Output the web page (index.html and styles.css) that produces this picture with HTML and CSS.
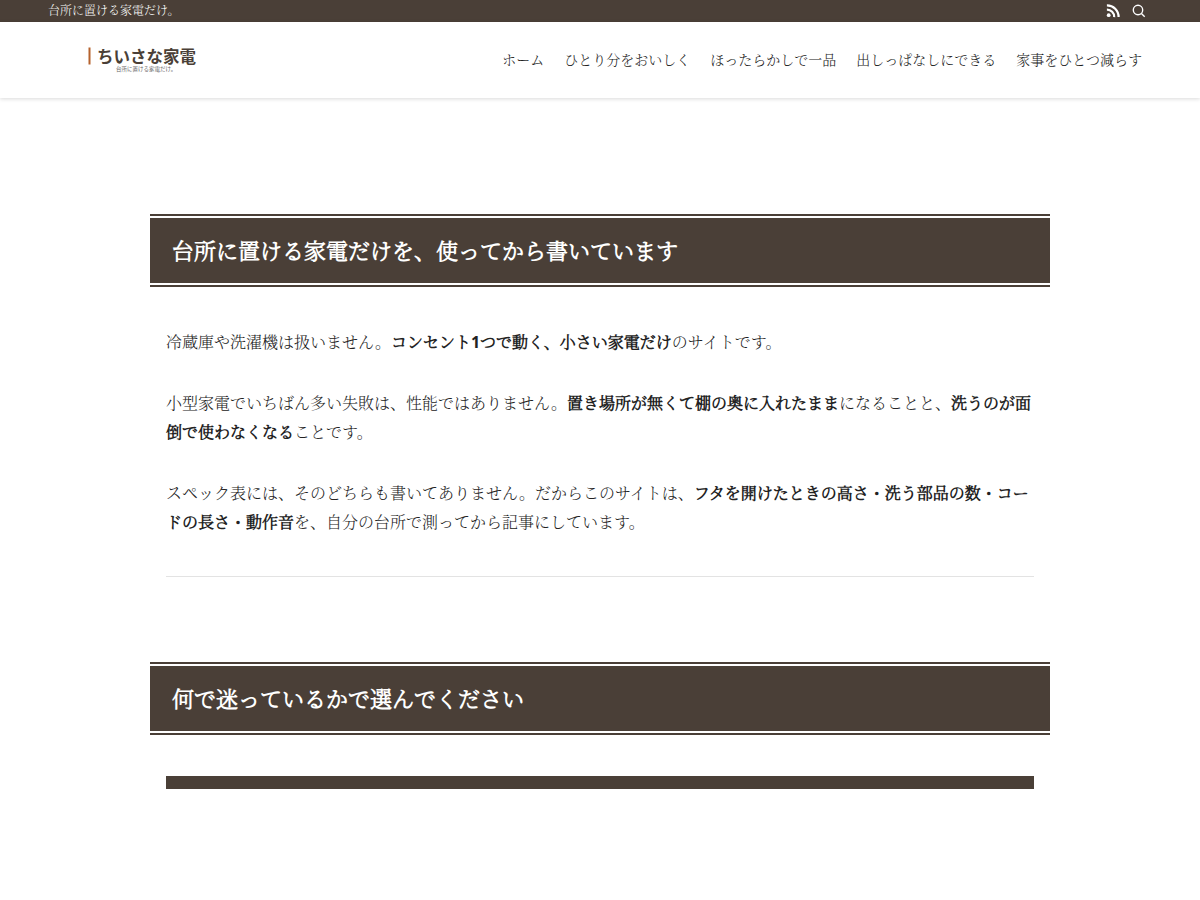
FILE: index.html
```
<!DOCTYPE html>
<html lang="ja">

<head>
  <meta charset="UTF-8">
  <meta name="viewport" content="width=device-width, initial-scale=1.0">
  <title>ちいさな家電</title>
  <link rel="stylesheet" href="styles.css">
</head>

<body>
  <div class="topbar">
    <p class="catch">台所に置ける家電だけ。</p>
    <div class="topicons">
      <a href="#" aria-label="RSS">
        <svg width="14" height="14" viewBox="0 0 14 14" fill="none" stroke="#fff" stroke-width="2.2">
          <circle cx="2.7" cy="11.2" r="1.9" fill="#fff" stroke="none"/>
          <path d="M0.9 5.6a7.2 7.2 0 0 1 7.3 7.5"/>
          <path d="M0.9 1.4a11.6 11.6 0 0 1 11.7 11.7"/>
        </svg>
      </a>
      <button type="button" aria-label="検索">
        <svg width="14" height="14" viewBox="0 0 14 14" fill="none" stroke="#fff" stroke-width="1.4">
          <circle cx="6" cy="6" r="4.7"/>
          <path d="M9.4 9.4l3.3 3.3"/>
        </svg>
      </button>
    </div>
  </div>

  <header class="header">
    <a class="logo" href="#" aria-label="ちいさな家電">
      <svg width="116" height="32" viewBox="0 0 232 64">
        <rect x="1" y="9" width="4" height="34" fill="#b5622d"/>
        <text class="logo-name" x="18" y="40">ちいさな家電</text>
        <text class="logo-sub" x="56" y="56">台所に置ける家電だけ。</text>
      </svg>
    </a>
    <nav class="nav">
      <a href="#">ホーム</a>
      <a href="#">ひとり分をおいしく</a>
      <a href="#">ほったらかしで一品</a>
      <a href="#">出しっぱなしにできる</a>
      <a href="#">家事をひとつ減らす</a>
    </nav>
  </header>

  <main class="content">
    <h2>台所に置ける家電だけを、使ってから書いています</h2>
    <div class="text">
      <p>冷蔵庫や洗濯機は扱いません。<strong>コンセント1つで動く、小さい家電だけ</strong>のサイトです。</p>
      <p>小型家電でいちばん多い失敗は、性能ではありません。<strong>置き場所が無くて棚の奥に入れたまま</strong>になることと、<strong>洗うのが面倒で使わなくなる</strong>ことです。</p>
      <p>スペック表には、そのどちらも書いてありません。だからこのサイトは、<strong>フタを開けたときの高さ・洗う部品の数・コードの長さ・動作音</strong>を、自分の台所で測ってから記事にしています。</p>
      <hr>
    </div>
    <h2>何で迷っているかで選んでください</h2>
    <div class="text">
      <div class="bar"></div>
    </div>
  </main>
</body>

</html>
```
FILE: styles.css
```
* {
  box-sizing: border-box;
}

body {
  margin: 0;
  background-color: #fff;
  color: #222;
  font-family: "Noto Sans", "Noto Serif CJK JP Light", "Noto Serif CJK JP", serif;
  font-size: 16px;
  line-height: 29px;
}

a {
  color: inherit;
  text-decoration: none;
}

.topbar {
  display: flex;
  justify-content: space-between;
  align-items: center;
  height: 22px;
  padding: 0 54px 0 48px;
  background-color: #4a3f37;
  color: #fff;
}

.catch {
  margin: 0;
  font-size: 12px;
  line-height: 20px;
}

.topicons {
  display: flex;
  gap: 12px;
}

.topicons a,
.topicons button {
  display: flex;
  padding: 0;
  border: none;
  background: none;
  cursor: pointer;
}

.header {
  display: flex;
  justify-content: space-between;
  align-items: center;
  height: 76px;
  padding: 0 58px 2px 88px;
  box-shadow: 0 1px 4px rgba(0, 0, 0, 0.15);
}

.logo svg {
  display: block;
}

.logo-name {
  fill: #4a3f37;
  font-family: "Noto Sans CJK JP", sans-serif;
  font-size: 33px;
  font-weight: bold;
}

.logo-sub {
  fill: #666;
  font-family: "Noto Sans CJK JP", sans-serif;
  font-size: 11px;
}

.nav {
  display: flex;
  gap: 20px;
  font-size: 14px;
}

.content {
  max-width: 900px;
  margin: 0 auto;
  padding: 116px 0 111px;
}

.content h2 {
  margin: 0 0 41px;
  padding: 16px 22px;
  border: solid #4a3f37;
  border-width: 2px 0;
  background-color: #4a3f37;
  box-shadow: inset 0 2px #fff, inset 0 -2px #fff;
  color: #fff;
  font-size: 22px;
  line-height: 37px;
}

.text {
  padding: 0 16px;
}

.text p {
  margin: 0 0 32px;
}

.text hr {
  height: 1px;
  margin: 39px 0 85px;
  border: none;
  background-color: #e3e3e3;
}

.bar {
  height: 13px;
  background-color: #4a3f37;
}
```
